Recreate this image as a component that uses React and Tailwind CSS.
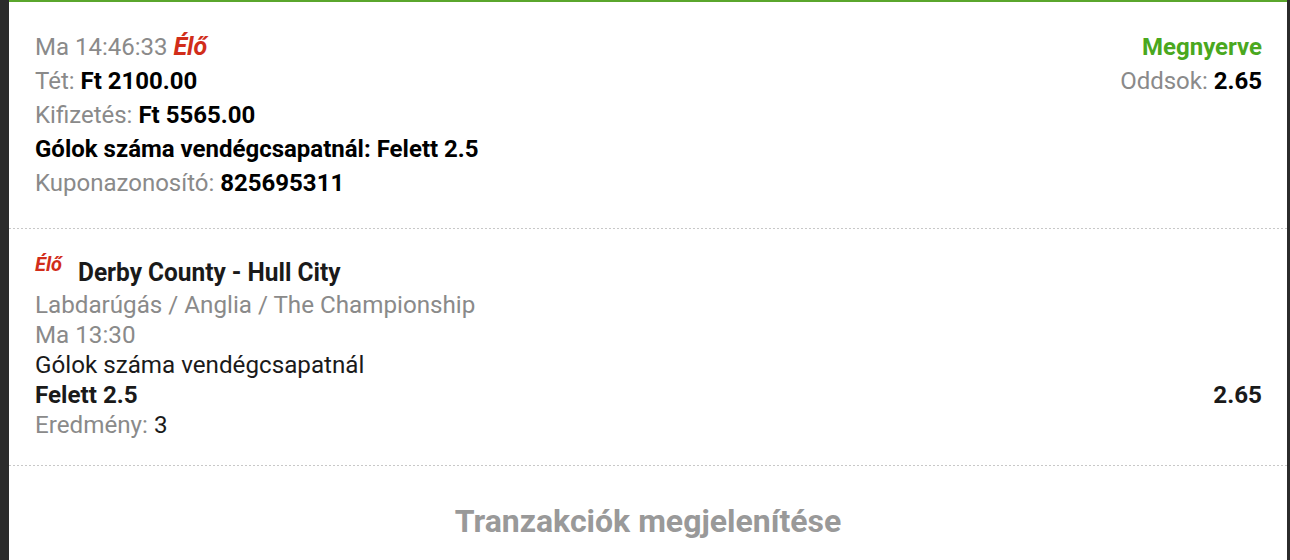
export default function App() {
  const font = { fontFamily: "Roboto, 'Noto Sans', sans-serif" };
  return (
    <div className="w-[1290px] h-[560px] overflow-hidden bg-[#2b2b2b] flex" style={font}>
      <div className="w-[9px] shrink-0 bg-[#2b2b2b]" />
      <div className="flex-1 bg-white border-t-2 border-[#5aa62c] flex flex-col">
        {/* Section 1 */}
        <div className="flex justify-between pl-[26px] pr-[25px] pt-[28px] pb-[28px] text-[24px] leading-[34px]">
          <div className="flex flex-col">
            <div className="text-[#8a8a8a]">
              Ma 14:46:33 <span className="text-[#d12d1a] font-bold italic text-[25px]">Élő</span>
            </div>
            <div><span className="text-[#8a8a8a]">Tét: </span><span className="font-bold text-black">Ft 2100.00</span></div>
            <div><span className="text-[#8a8a8a]">Kifizetés: </span><span className="font-bold text-black">Ft 5565.00</span></div>
            <div className="font-bold text-black">Gólok száma vendégcsapatnál: Felett 2.5</div>
            <div><span className="text-[#8a8a8a]">Kuponazonosító: </span><span className="font-bold text-black">825695311</span></div>
          </div>
          <div className="flex flex-col items-end">
            <div className="font-bold text-[#4aa81e]">Megnyerve</div>
            <div><span className="text-[#8a8a8a]">Oddsok: </span><span className="font-bold text-black">2.65</span></div>
          </div>
        </div>
        <div className="h-px bg-[linear-gradient(to_right,#c8c8c8_50%,transparent_50%)] bg-[length:4px_1px]" />
        {/* Section 2 */}
        <div className="flex flex-col pl-[26px] pr-[25px] pt-[25px] pb-[25px] text-[24.2px] leading-[30px]">
          <div className="flex items-start h-[36px]">
            <span className="text-[#d12d1a] font-bold italic text-[20px] leading-[22px] -mt-[1px] w-[43px] shrink-0">Élő</span>
            <span className="font-bold text-[#1a1a1a] text-[26px] leading-[36px] inline-block origin-left scale-x-[0.94] whitespace-nowrap">Derby County - Hull City</span>
          </div>
          <div className="text-[#8a8a8a]">Labdarúgás / Anglia / The Championship</div>
          <div className="text-[#8a8a8a]">Ma 13:30</div>
          <div className="text-[#1a1a1a]">Gólok száma vendégcsapatnál</div>
          <div className="flex justify-between font-bold text-[#1a1a1a]">
            <span>Felett 2.5</span>
            <span>2.65</span>
          </div>
          <div><span className="text-[#8a8a8a]">Eredmény: </span><span className="text-[#1a1a1a]">3</span></div>
        </div>
        <div className="h-px bg-[linear-gradient(to_right,#c8c8c8_50%,transparent_50%)] bg-[length:4px_1px]" />
        {/* Section 3 */}
        <div className="flex justify-center pt-[35px]">
          <span className="font-bold text-[#999999] text-[32px] leading-[40px] whitespace-nowrap">Tranzakciók megjelenítése</span>
        </div>
      </div>
      <div className="w-[3px] shrink-0 bg-[#2b2b2b]" />
    </div>
  );
}
